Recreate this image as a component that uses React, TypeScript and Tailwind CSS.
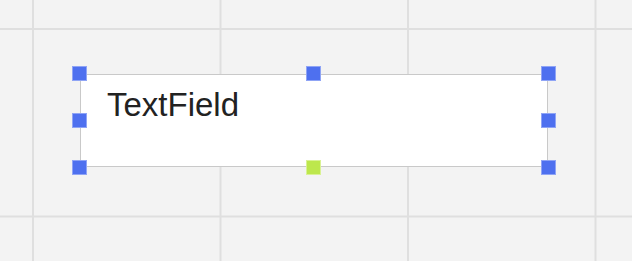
import React from 'react';

const BLUE = 'bg-[#4e70ef] border border-[#8fa4f5]';
const LIME = 'bg-[#bde74c] border border-[#d9f294]';

function Handle({ pos, color = BLUE }: { pos: string; color?: string }) {
  return <div className={`absolute w-[15px] h-[15px] ${color} ${pos}`} />;
}

export default function App() {
  return (
    <div
      className="w-[632px] h-[261px] overflow-hidden bg-[#f3f3f3] pl-[80px] pt-[74px]
                 bg-[linear-gradient(to_right,#dfdfdf_2px,transparent_2px),linear-gradient(to_bottom,#dfdfdf_2px,transparent_2px)]
                 bg-[size:187.5px_187.5px] bg-[position:32px_28px]"
    >
      {/* Selected TextField */}
      <div className="relative w-[468px] h-[93px] bg-white border border-[#c9c9c9]">
        <div
          className="pl-[26px] pt-[11px] text-[33px] text-[#222] leading-[normal]"
          style={{ fontFamily: '"Liberation Sans", Arial, sans-serif' }}
        >
          TextField
        </div>

        <Handle pos="-left-[9px] -top-[9px]" />
        <Handle pos="left-[225px] -top-[9px]" />
        <Handle pos="left-[460px] -top-[9px]" />
        <Handle pos="-left-[9px] top-[38px]" />
        <Handle pos="left-[460px] top-[38px]" />
        <Handle pos="-left-[9px] top-[85px]" />
        <Handle pos="left-[225px] top-[85px]" color={LIME} />
        <Handle pos="left-[460px] top-[85px]" />
      </div>
    </div>
  );
}
